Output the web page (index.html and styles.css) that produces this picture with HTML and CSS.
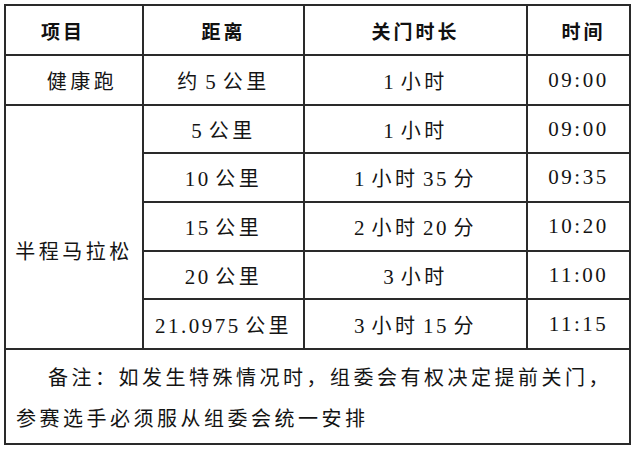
FILE: index.html
```html
<!DOCTYPE html>
<html lang="zh-CN">
<head>
<meta charset="utf-8">
<link rel="stylesheet" href="styles.css">
</head>
<body>
<table class="schedule">
  <colgroup>
    <col class="c1"><col class="c2"><col class="c3"><col class="c4">
  </colgroup>
  <thead>
    <tr class="head">
      <th class="h-item">项目</th>
      <th>距离</th>
      <th>关门时长</th>
      <th class="h-time">时间</th>
    </tr>
  </thead>
  <tbody>
    <tr class="r50">
      <td class="item-fun">健康跑</td>
      <td>约 <span class="num">5</span> 公里</td>
      <td><span class="num">1</span> 小时</td>
      <td><span class="num">09:00</span></td>
    </tr>
    <tr class="r48">
      <td class="item-half" rowspan="5">半程马拉松</td>
      <td><span class="num">5</span> 公里</td>
      <td><span class="num">1</span> 小时</td>
      <td><span class="num">09:00</span></td>
    </tr>
    <tr class="r49">
      <td><span class="num">10</span> 公里</td>
      <td><span class="num">1</span> 小时 <span class="num">35</span> 分</td>
      <td><span class="num">09:35</span></td>
    </tr>
    <tr class="r49">
      <td><span class="num">15</span> 公里</td>
      <td><span class="num">2</span> 小时 <span class="num">20</span> 分</td>
      <td><span class="num">10:20</span></td>
    </tr>
    <tr class="r48">
      <td><span class="num">20</span> 公里</td>
      <td><span class="num">3</span> 小时</td>
      <td><span class="num">11:00</span></td>
    </tr>
    <tr class="r50">
      <td><span class="num">21.0975</span> 公里</td>
      <td><span class="num">3</span> 小时 <span class="num">15</span> 分</td>
      <td><span class="num">11:15</span></td>
    </tr>
    <tr class="note">
      <td colspan="4"><p class="note-text">备注：如发生特殊情况时，组委会有权决定提前关门，<br>参赛选手必须服从组委会统一安排</p></td>
    </tr>
  </tbody>
</table>
</body>
</html>
```

FILE: styles.css
```css
html, body {
  margin: 0;
  padding: 0;
  background: #fff;
}
body {
  padding: 4px 0 0 4px;
}
.schedule {
  border-collapse: collapse;
  table-layout: fixed;
  width: 627px;
  font-family: "Liberation Serif", "Noto Sans CJK SC", serif;
  font-size: 20px;
  letter-spacing: 3.5px;
  word-spacing: -4px;
  color: #141414;
}
.c1 { width: 138px; }
.c2 { width: 161px; }
.c3 { width: 223px; }
.c4 { width: 103px; }
.schedule th,
.schedule td {
  border: 2px solid #2a2a2a;
  padding: 0;
  text-align: center;
  vertical-align: middle;
  font-weight: 400;
  white-space: nowrap;
}
.schedule th {
  font-family: "Noto Sans CJK SC", sans-serif;
  font-weight: 700;
  font-size: 19px;
  letter-spacing: 3px;
  color: #111;
}
.num {
  font-size: 21px;
  letter-spacing: 2.5px;
}
.head { height: 50px; }
.r50 { height: 50px; }
.r49 { height: 49px; }
.r48 { height: 48px; }
.schedule .h-item { padding-right: 22px; }
.schedule .h-time { padding-left: 10px; }
.schedule .item-fun { padding-left: 16px; }
.schedule .item-half {
  vertical-align: top;
  padding-top: 130px;
}
.note { height: 95px; }
.schedule .note td {
  text-align: left;
  vertical-align: top;
  padding: 8px 0 0 10px;
}
.note-text {
  margin: 0;
  line-height: 41px;
  text-indent: 32px;
  white-space: nowrap;
}
```
